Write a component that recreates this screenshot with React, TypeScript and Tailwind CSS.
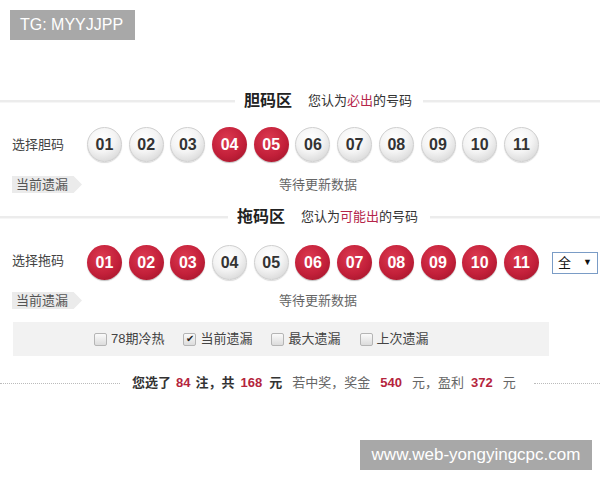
import React from 'react';

const FONT = "font-['Liberation_Sans','Noto_Sans_CJK_SC',sans-serif]";

const RED_SET_1 = [4, 5];
const RED_SET_2 = [1, 2, 3, 6, 7, 8, 9, 10, 11];
const NUMBERS = Array.from({ length: 11 }, (_, i) => i + 1);

const Ball: React.FC<{ n: number; red: boolean }> = ({ n, red }) => (
  <div
    className={`w-[35px] h-[35px] rounded-full flex items-center justify-center text-[16px] font-bold ${
      red
        ? 'text-white bg-[radial-gradient(circle_at_42%_35%,#dc3a50_0%,#c3203a_55%,#9a1226_100%)] shadow-[0_1px_1px_rgba(0,0,0,0.25)]'
        : 'text-[#333] border border-[#cfcfcf] bg-[radial-gradient(circle_at_42%_32%,#ffffff_0%,#f4f4f4_45%,#cdcdcd_100%)] shadow-[0_1px_1px_rgba(0,0,0,0.15)]'
    }`}
  >
    {String(n).padStart(2, '0')}
  </div>
);

const SectionHeader: React.FC<{ title: string; hot: string; leftW: string; gapL: string; gapR: string }> = ({
  title,
  hot,
  leftW,
  gapL,
  gapR,
}) => (
  <div className="flex items-center h-[24px]">
    <div className={`${leftW} h-[3px] bg-[#ececec] border-b border-[#f6f6f6]`} />
    <span className={`${gapL} text-[16px] font-bold text-[#222]`}>{title}</span>
    <span className="ml-[16px] text-[13px] text-[#333]">
      您认为<span className="text-[#b5254a]">{hot}</span>的号码
    </span>
    <div className={`${gapR} flex-1 h-[3px] bg-[#ececec] border-b border-[#f6f6f6]`} />
  </div>
);

const MissTag: React.FC = () => (
  <div className="flex items-center h-[17px]">
    <div className="ml-[12px] w-[70px] h-[17px] pl-[4px] bg-[#ebebeb] text-[13px] leading-[17px] text-[#555] [clip-path:polygon(0_0,88%_0,100%_50%,88%_100%,0_100%)]">
      当前遗漏
    </div>
    <span className="ml-[197px] text-[13px] text-[#666]">等待更新数据</span>
  </div>
);

const Check: React.FC<{ label: string; checked?: boolean }> = ({ label, checked }) => (
  <div className="flex items-center gap-[4px]">
    <div className="w-[13px] h-[13px] border border-[#b5b5b5] rounded-[2px] bg-[linear-gradient(#fafafa,#dcdcdc)] flex items-center justify-center text-[10px] leading-none text-[#222]">
      {checked ? '✔' : ''}
    </div>
    <span className="text-[13px] text-[#444]">{label}</span>
  </div>
);

export default function App() {
  return (
    <div className={`w-[600px] h-[480px] bg-white relative overflow-hidden ${FONT}`}>
      <div className="absolute left-[10px] top-[10px] w-[125px] h-[30px] bg-[#a8a8a8] text-white text-[16px] flex items-center pl-[10px]">
        TG: MYYJJPP
      </div>

      <div className="pt-[89px] flex flex-col">
        <SectionHeader title="胆码区" hot="必出" leftW="w-[235px]" gapL="ml-[9px]" gapR="ml-[11px]" />

        <div className="mt-[14px] flex items-center h-[35px]">
          <span className="pl-[12px] w-[87px] text-[13px] text-[#444]">选择胆码</span>
          <div className="flex gap-[6.7px]">
            {NUMBERS.map(n => (
              <Ball key={n} n={n} red={RED_SET_1.includes(n)} />
            ))}
          </div>
        </div>

        <div className="mt-[14px]">
          <MissTag />
        </div>

        <div className="mt-[12px]">
          <SectionHeader title="拖码区" hot="可能出" leftW="w-[228px]" gapL="ml-[9px]" gapR="ml-[12px]" />
        </div>

        <div className="mt-[16px] flex items-center h-[35px]">
          <span className="pl-[12px] w-[87px] text-[13px] text-[#444] -mt-[3px]">选择拖码</span>
          <div className="flex gap-[6.7px]">
            {NUMBERS.map(n => (
              <Ball key={n} n={n} red={RED_SET_2.includes(n)} />
            ))}
          </div>
          <div className="ml-[13px] w-[46px] h-[22px] border border-[#7a9cc6] bg-white flex items-center justify-between px-[5px] text-[13px] text-[#111]">
            <span>全</span>
            <span className="text-[9px]">▼</span>
          </div>
        </div>

        <div className="mt-[12px]">
          <MissTag />
        </div>

        <div className="mt-[13px] ml-[13px] w-[536px] h-[34px] bg-[#f2f2f2] flex items-center pl-[81px] gap-[19px]">
          <Check label="78期冷热" />
          <Check label="当前遗漏" checked />
          <Check label="最大遗漏" />
          <Check label="上次遗漏" />
        </div>

        <div className="mt-[19px] flex items-center h-[16px] text-[13px]">
          <div className="w-[120px] border-t border-dotted border-[#bbb]" />
          <span className="ml-[12px] font-bold text-[#333]">您选了</span>
          <span className="ml-[5px] font-bold text-[#b5253d]">84</span>
          <span className="ml-[5px] font-bold text-[#333]">注，共</span>
          <span className="ml-[6px] font-bold text-[#b5253d]">168</span>
          <span className="ml-[7px] font-bold text-[#333]">元</span>
          <span className="ml-[10px] text-[#666]">若中奖，奖金</span>
          <span className="ml-[10px] font-bold text-[#b5253d]">540</span>
          <span className="ml-[10px] text-[#666]">元，盈利</span>
          <span className="ml-[7px] font-bold text-[#b5253d]">372</span>
          <span className="ml-[10px] text-[#666]">元</span>
          <div className="ml-[18px] flex-1 border-t border-dotted border-[#bbb]" />
        </div>
      </div>

      <div className="absolute left-[360px] top-[440px] w-[232px] h-[30px] bg-[#a8a8a8] text-white text-[17px] flex items-center justify-center">
        www.web-yongyingcpc.com
      </div>
    </div>
  );
}
